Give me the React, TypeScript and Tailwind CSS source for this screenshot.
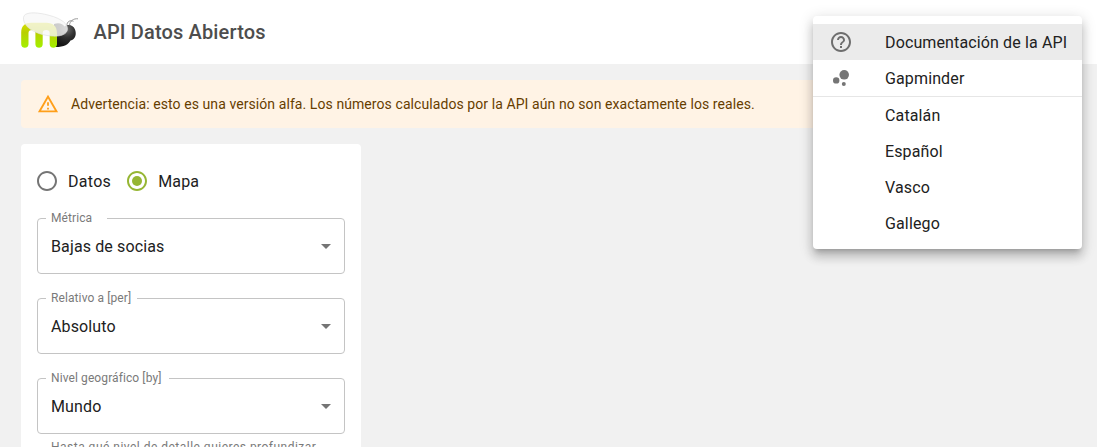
import React from "react";

function Logo() {
  return (
    <svg width="58" height="38" viewBox="0 0 58 38" className="-mt-0.5 shrink-0">
      <defs>
        <linearGradient id="body" x1="0" y1="10" x2="0" y2="36" gradientUnits="userSpaceOnUse">
          <stop offset="0" stopColor="#dbe000" />
          <stop offset="0.4" stopColor="#b9cf00" />
          <stop offset="1" stopColor="#a2f000" />
        </linearGradient>
        <radialGradient id="head" cx="0.6" cy="0.25" r="0.7">
          <stop offset="0" stopColor="#6b6b6b" />
          <stop offset="0.5" stopColor="#303030" />
          <stop offset="1" stopColor="#151515" />
        </radialGradient>
      </defs>
      <path
        d="M33 12 C38 10 42 12 43.500 14.500 C47 11.800 52.500 13 54 17.500 C55.800 22 54.500 27.500 49.500 28.500 C47.500 32.500 43 35.300 33 35 Z"
        fill="url(#head)"
      />
      <path
        d="M45.800 13.500 C46 9.500 49 7.800 52.500 9.300 M48.500 13 C49 9 52.500 6.300 57 6.800"
        fill="none"
        stroke="#8f8f8f"
        strokeWidth="0.9"
      />
      <path
        d="M0.200 32.200 V20.500 C0.200 14 4 10.800 10 10.800 H25.500 C32 10.800 36 14.500 36 21 V32.200 C36 36.900 28.700 36.900 28.700 32.200 V21 C28.700 19 27.500 18 25.200 18 C22.900 18 21.700 19 21.700 21 V32.200 C21.700 36.900 14.400 36.900 14.400 32.200 V21 C14.400 19 13.200 18 11 18 C8.700 18 7.500 19 7.500 21 V32.200 C7.500 36.900 0.200 36.900 0.200 32.200 Z"
        fill="url(#body)"
      />
      <path
        d="M3.200 3.600 C5.500 0.300 14 0.200 23.500 2.200 C36 4.800 46.300 9.800 46.500 16.500 C46.600 22.500 39.500 24.600 31.500 24.100 C19 23.400 8.500 18.500 4.500 12.500 C2.500 9.500 1.700 6 3.200 3.600 Z"
        fill="#f7f7f7"
        fillOpacity="0.8"
        stroke="#dedede"
        strokeOpacity="0.8"
        strokeWidth="0.8"
      />
    </svg>
  );
}

function Radio({ checked }: { checked?: boolean }) {
  return (
    <svg
      width="24"
      height="24"
      viewBox="0 0 24 24"
      className={checked ? "fill-[#96b633]" : "fill-[#757575]"}
    >
      <path d="M12 2C6.48 2 2 6.480 2 12s4.480 10 10 10 10-4.480 10-10S17.520 2 12 2zm0 18c-4.420 0-8-3.580-8-8s3.580-8 8-8 8 3.580 8 8-3.580 8-8 8z" />
      {checked && <circle cx="12" cy="12" r="5" />}
    </svg>
  );
}

function Select({ label, value, notch }: { label: string; value: string; notch: string }) {
  return (
    <div className="relative flex h-14 items-center justify-between pl-3.5 pr-[7px]">
      <fieldset className="pointer-events-none absolute -top-[5px] bottom-0 left-0 right-0 rounded-[4px] border border-[#c4c4c4] px-2">
        <legend className={`block h-[11px] p-0 ${notch}`} />
      </fieldset>
      <span className="absolute left-0 top-0 origin-top-left translate-x-[14px] translate-y-[-9px] scale-75 whitespace-nowrap text-[16px] leading-[23px] tracking-[0.13px] text-[#7a7a7a]">
        {label}
      </span>
      <span className="text-[16px] leading-[23px] tracking-[0.13px]">{value}</span>
      <svg width="24" height="24" viewBox="0 0 24 24" className="fill-[#757575]">
        <path d="M7 10l5 5 5-5z" />
      </svg>
    </div>
  );
}

function MenuItem({
  children,
  icon,
  active,
}: {
  children: React.ReactNode;
  icon?: React.ReactNode;
  active?: boolean;
}) {
  return (
    <li className={`flex h-9 items-center px-4 ${active ? "bg-[#ebebeb]" : ""}`}>
      <span className="w-14 shrink-0">{icon}</span>
      <span className="whitespace-nowrap pt-0.5 tracking-[0.13px]">{children}</span>
    </li>
  );
}

export default function App() {
  return (
    <div className="relative h-[447px] w-full overflow-hidden bg-[#f1f1f1] font-[Roboto,sans-serif] text-[16px] leading-6 tracking-[0.15px] text-[#212121]">
      <header className="flex h-16 items-center bg-white pl-[21px]">
        <Logo />
        <h1 className="ml-[14.500px] text-[20px] font-medium leading-8 text-[#4d4d4d]">
          API Datos Abiertos
        </h1>
      </header>

      <main className="flex flex-col items-start gap-4 px-[21px] pt-4">
        <div className="flex h-12 w-full items-center rounded-[4px] bg-[#fff3e5] px-4 text-[14px] leading-5 tracking-[0.08px] text-[#663d00]">
          <svg width="22" height="22" viewBox="0 0 24 24" className="mr-3 fill-[#ff9f1a]">
            <path d="M12 5.990L19.530 19H4.470L12 5.990M12 2L1 21h22L12 2zm1 14h-2v2h2v-2zm0-6h-2v4h2v-4z" />
          </svg>
          <p>
            Advertencia: esto es una versión alfa. Los números calculados por la API aún no son
            exactamente los reales.
          </p>
        </div>

        <section className="h-[360px] w-[340px] rounded-[4px] bg-white px-4 pt-4">
          <div className="-ml-0.5 mb-4 flex h-[42px] items-center">
            <label className="flex items-center gap-[9px]">
              <Radio />
              <span className="pt-0.5 tracking-[0.3px]">Datos</span>
            </label>
            <label className="ml-[14px] flex items-center gap-[9px]">
              <Radio checked />
              <span className="pt-0.5">Mapa</span>
            </label>
          </div>
          <div className="flex flex-col gap-6">
            <Select label="Métrica" value="Bajas de socias" notch="w-[61px]" />
            <Select label="Relativo a [per]" value="Absoluto" notch="w-[91px]" />
            <Select label="Nivel geográfico [by]" value="Mundo" notch="w-[123px]" />
          </div>
          <p className="mx-3.5 mt-[3px] whitespace-nowrap text-[12px] leading-5 tracking-[0.48px] text-[#7a7a7a]">
            Hasta qué nivel de detalle quieres profundizar
          </p>
        </section>
      </main>

      <ul className="absolute right-[15px] top-4 w-[269px] rounded-[4px] bg-white py-2 shadow-[0px_5px_5px_-3px_rgba(0,0,0,0.2),0px_8px_10px_1px_rgba(0,0,0,0.14),0px_3px_14px_2px_rgba(0,0,0,0.12)]">
        <MenuItem
          active
          icon={
            <svg width="24" height="24" viewBox="0 0 24 24" className="fill-[#6e6e6e]">
              <path d="M11 18h2v-2h-2v2zm1-16C6.480 2 2 6.480 2 12s4.480 10 10 10 10-4.480 10-10S17.520 2 12 2zm0 18c-4.410 0-8-3.590-8-8s3.590-8 8-8 8 3.590 8 8-3.590 8-8 8zm0-14c-2.210 0-4 1.790-4 4h2c0-1.100.9-2 2-2s2 .9 2 2c0 2-3 1.750-3 5h2c0-2.250 3-2.500 3-5 0-2.210-1.790-4-4-4z" />
            </svg>
          }
        >
          Documentación de la API
        </MenuItem>
        <MenuItem
          icon={
            <svg width="24" height="24" viewBox="0 0 24 24" className="fill-[#757575]">
              <circle cx="7.200" cy="14.400" r="3.200" />
              <circle cx="14.800" cy="18" r="2" />
              <circle cx="15.200" cy="8.800" r="4.800" />
            </svg>
          }
        >
          Gapminder
        </MenuItem>
        <li className="h-px bg-[#e6e6e6]" />
        <MenuItem>Catalán</MenuItem>
        <MenuItem>Español</MenuItem>
        <MenuItem>Vasco</MenuItem>
        <MenuItem>Gallego</MenuItem>
      </ul>
    </div>
  );
}
